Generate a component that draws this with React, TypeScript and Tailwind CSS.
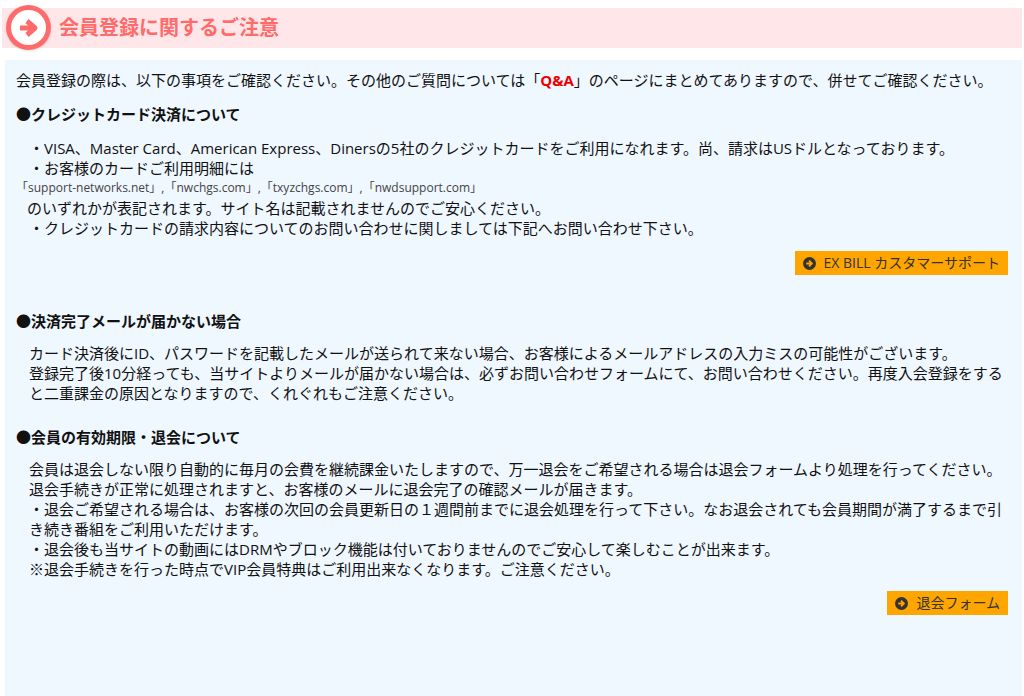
export default function App() {
  const f = { fontFamily: '"Open Sans","Noto Sans CJK JP",sans-serif' };
  const Btn = ({ t }: { t: string }) => (
    <span className="inline-flex items-center gap-[8px] bg-[#ffa500] text-[#333] text-[14px] h-[24px] px-[8px]">
      <svg width="13" height="13" viewBox="0 0 14 14"><circle cx="7" cy="7" r="7" fill="#333" /><path d="M3.5 7h5M6.5 4l3 3-3 3" stroke="#ffa500" strokeWidth="2" fill="none" /></svg>
      {t}
    </span>
  );
  return (
    <div className="w-[1024px] h-[696px] bg-white overflow-hidden text-[15px] leading-[20px] text-[#111]" style={f}>
      <div className="relative mt-[8px] ml-[2px] mr-[2px] h-[40px] bg-[#ffe6e8] flex items-center pl-[57px]">
        <div className="absolute left-[4px] top-[-3px] w-[45px] h-[45px] rounded-full bg-[#ff6b6b] flex items-center justify-center shadow">
          <div className="w-[35px] h-[35px] rounded-full bg-white flex items-center justify-center">
            <svg width="22" height="20" viewBox="0 0 22 20"><path d="M2 10h12M9 3l8 7-8 7" stroke="#ff6b6b" strokeWidth="5" fill="none" strokeLinejoin="round" /></svg>
          </div>
        </div>
        <h1 className="text-[20px] font-bold text-[#ff6b6b]">会員登録に関するご注意</h1>
      </div>
      <div className="mt-[12px] ml-[5px] mr-[2px] h-[640px] bg-[#eff7ff] pl-[11px] pr-[14px] pt-[10px]">
        <p>会員登録の際は、以下の事項をご確認ください。その他のご質問については「<b className="text-[#ee0000]">Q&amp;A</b>」のページにまとめてありますので、併せてご確認ください。</p>
        <h2 className="font-bold mt-[14px]">●クレジットカード決済について</h2>
        <div className="pl-[13px] mt-[14px]">
          <p>・VISA、Master Card、American Express、Dinersの5社のクレジットカードをご利用になれます。尚、請求はUSドルとなっております。</p>
          <p>・お客様のカードご利用明細には</p>
          <p className="text-[12px] text-[#444] leading-[20px] -ml-[13px]">「support-networks.net」,「nwchgs.com」,「txyzchgs.com」,「nwdsupport.com」</p>
          <p className="-ml-[2px]">のいずれかが表記されます。サイト名は記載されませんのでご安心ください。</p>
          <p>・クレジットカードの請求内容についてのお問い合わせに関しましては下記へお問い合わせ下さい。</p>
        </div>
        <div className="flex justify-end mt-[13px]"><Btn t="EX BILL カスタマーサポート" /></div>
        <h2 className="font-bold mt-[36px]">●決済完了メールが届かない場合</h2>
        <div className="pl-[13px] mt-[12px]">
          <p>カード決済後にID、パスワードを記載したメールが送られて来ない場合、お客様によるメールアドレスの入力ミスの可能性がございます。</p>
          <p>登録完了後10分経っても、当サイトよりメールが届かない場合は、必ずお問い合わせフォームにて、お問い合わせください。再度入会登録をすると二重課金の原因となりますので、くれぐれもご注意ください。</p>
        </div>
        <h2 className="font-bold mt-[24px]">●会員の有効期限・退会について</h2>
        <div className="pl-[13px] mt-[12px]">
          <p>会員は退会しない限り自動的に毎月の会費を継続課金いたしますので、万一退会をご希望される場合は退会フォームより処理を行ってください。退会手続きが正常に処理されますと、お客様のメールに退会完了の確認メールが届きます。</p>
          <p>・退会ご希望される場合は、お客様の次回の会員更新日の１週間前までに退会処理を行って下さい。なお退会されても会員期間が満了するまで引き続き番組をご利用いただけます。</p>
          <p>・退会後も当サイトの動画にはDRMやブロック機能は付いておりませんのでご安心して楽しむことが出来ます。</p>
          <p>※退会手続きを行った時点でVIP会員特典はご利用出来なくなります。ご注意ください。</p>
        </div>
        <div className="flex justify-end mt-[12px]"><Btn t="退会フォーム" /></div>
      </div>
    </div>
  );
}
